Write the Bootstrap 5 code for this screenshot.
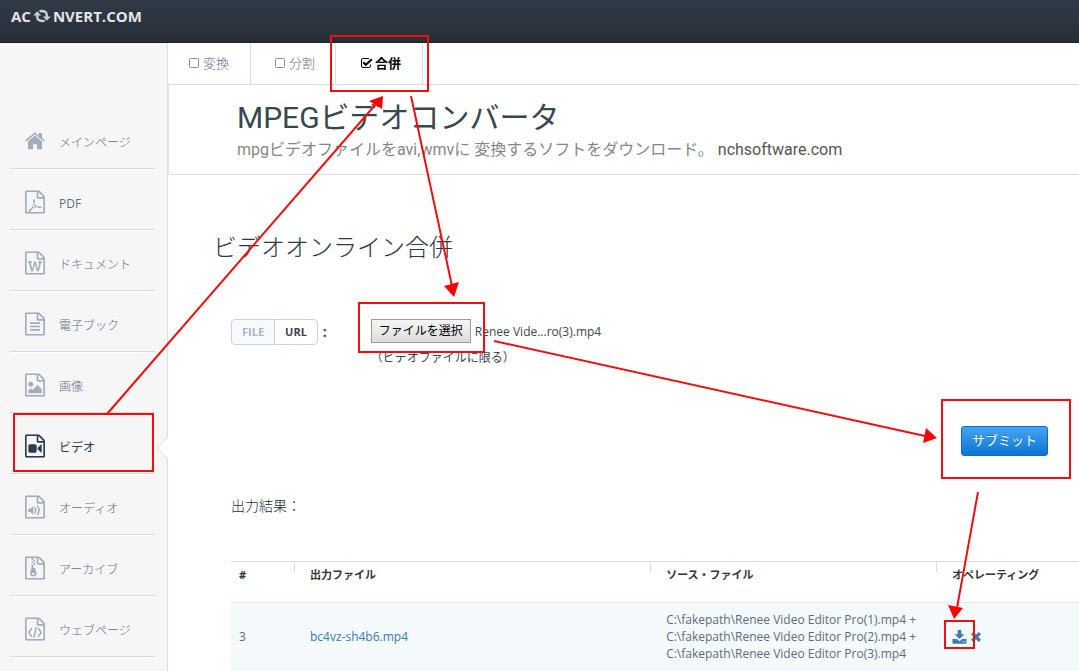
<!DOCTYPE html>
<html lang="ja">
<head>
<meta charset="utf-8">
<meta name="viewport" content="width=device-width, initial-scale=1">
<title>ビデオオンライン合併 - ACONVERT.COM</title>
<link rel="stylesheet" href="https://cdn.jsdelivr.net/npm/bootstrap@5.3.0/dist/css/bootstrap.min.css">
<style>
  body { font: 12px/17px "Open Sans", "Noto Sans CJK JP", sans-serif; color: #3c4650; background: #fff; overflow-x: hidden; }
  a { text-decoration: none; color: #3a7ab0; }
  .topbar { height: 43px; padding: 6px 11px; background: linear-gradient(#303b47, #272e38); border-bottom: 1px solid #1b2026; }
  .brand { color: #e4e6e8; font-size: 15px; line-height: 20px; font-weight: 700; gap: 2px; }
  .side { width: 168px; padding: 65px 12px 0 10px; background: #f6f6f6; border-right: 1px solid #d9dfe6; }
  .side-link { height: 61px; padding: 8px 0 0 15px; gap: 14px; color: #5f7087; font-weight: 300; border-bottom: 1px solid #d5dbe1; box-shadow: 0 1px #fff; }
  .side-link svg { width: 20px; height: 24px; margin-bottom: 2px; fill: #a0adbd; stroke: none; }
  .side-link.current { color: #2a3b4c; font-weight: 400; }
  .side-link.current svg { fill: #2a3b4c; }
  .notch { position: absolute; right: -13px; top: 23px; width: 12px; height: 24px; overflow: hidden; }
  .side-link .notch svg { display: block; width: 12px; height: 24px; fill: #fff; stroke: #d9dfe6; }
  .tabs { height: 42px; border-bottom: 1px solid #d5dce4; }
  .tabs a { gap: 2px; padding: 0 21px 0 20px; color: #5f7087; font-size: 13px; font-weight: 300; border-right: 1px solid #d9dfe6; }
  .tabs a + a { padding: 0 20px 0 23px; }
  .tabs a.current { padding: 0 21px 0 24px; color: #000; font-weight: 700; }
  .tabs svg { width: 13px; height: 13px; }
  .promo { height: 90px; padding: 15px 0 0 68px; border-left: 1px solid #e2e4e6; border-bottom: 1px solid #dfe1e3; font-family: Roboto, "Noto Sans CJK JP", sans-serif; }
  .promo h2 { font-size: 30px; line-height: 36px; font-weight: 300; }
  .promo h2 a { color: #37474f; font-weight: 400; }
  .promo p { font-size: 16px; line-height: 28px; color: #868686; }
  .promo p a { color: #555; }
  .work { padding-top: 56px; }
  .work h1 { margin: 0 0 56px 45px; font-size: 24px; line-height: 32px; font-weight: 300; color: #2d3741; }
  .form-line { padding-left: 63px; }
  .switch .btn { padding: 0 10px; height: 26px; font-size: 11px; line-height: 24px; font-weight: 700; color: #3c4650; background: #fff; border: 1px solid #cbd3dd; border-radius: 4px; }
  .switch .btn:first-child { color: #a9b5c4; background: #f8f9fa; }
  .colon { width: 49px; padding-left: 5px; font-size: 14px; font-weight: 700; }
  .pick { height: 24px; width: 100px; padding: 0; font-size: 12px; line-height: 20px; color: #000; border: 1px solid #999; background: linear-gradient(#f6f6f6, #dcdcdc); }
  .hint { margin-top: 6px; }
  .send { height: 30px; width: 87px; padding: 0; margin: 60px 31px 0 0; font-size: 13px; color: #fff; border: 1px solid #0b6cc4; border-radius: 3px; background: linear-gradient(#45a5f5, #0c74d4); text-shadow: 0 -1px rgba(0,0,0,.2); }
  .send:hover { color: #fff; }
  .result-title { margin: 39px 0 44px 63px; font-size: 14px; line-height: 22px; font-weight: 300; color: #222c36; }
  .grid-wrap { padding-left: 63px; }
  .files { table-layout: fixed; width: 100%; color: #5d6b7c; }
  .files th { height: 41px; padding: 3px 16px 0; font-size: 11px; line-height: 20px; font-weight: 700; color: #333; vertical-align: top; border-top: 1px solid #dadee1;
    background: linear-gradient(#d8dce0, #d8dce0) no-repeat 0 0 / 1px 10px; }
  .files th:first-child { background: none; }
  .files td { height: 68px; padding: 0 16px; background: #f4f9fc; border-top: 1px solid #e3eaef; vertical-align: middle; }
  .files th:first-child, .files td:first-child { padding-left: 8px; }
  .files svg { fill: #3a7ab0; }
  .marks { position: absolute; left: 0; top: 0; width: 1079px; height: 671px; pointer-events: none; }
</style>
</head>
<body class="d-flex flex-column min-vh-100 position-relative">

<header class="topbar">
  <a class="brand d-inline-flex align-items-center" href="#">AC<svg width="18" height="16" viewBox="0 0 18 16" fill="none" stroke="#c9ced4" stroke-width="2.4" aria-label="O"><path d="M4.200 7v1.500q0 4.500 5 4.500 1.500 0 2.300-.6M6.500 3.600Q7.300 3 8.800 3q5 0 5 4.500V9"/><path d="M.2 7.600 4.200 3.200 8.200 7.600zM9.800 8.400 13.800 12.800 17.800 8.400z" fill="#c9ced4" stroke="none"/></svg>NVERT.COM</a>
</header>

<svg class="d-none" aria-hidden="true">
  <symbol id="sheet" viewBox="0 0 1536 1792"><path d="M1468 380q28 28 48 76t20 88v1152q0 40-28 68t-68 28H96q-40 0-68-28t-28-68V96q0-40 28-68T96 0h896q40 0 88 20t76 48zM1024 136v376h376q-10-29-22-41l-313-313q-12-12-41-22zm384 1528V640H992q-40 0-68-28t-28-68V128H128v1536z"/></symbol>
</svg>

<div class="d-flex flex-fill">
  <nav class="side flex-shrink-0">
    <a class="side-link d-flex align-items-center" href="#"><svg viewBox="0 0 20 24"><path d="M10 6.500 3 12.300V19.500q0 .8.800.8H8v-5h4v5h4.200q.8 0 .8-.8v-7.200zM19.900 11.300 17 8.900V4h-3v2.400L10.900 3.900q-.9-.7-1.800 0L.1 11.300l1 1.200L10 5.200l8.900 7.300z"/></svg>メインページ</a>
    <a class="side-link d-flex align-items-center" href="#"><svg viewBox="0 0 1536 1792"><use href="#sheet"/><path d="M640 700q70-60 110 20t-10 320q80 130 190 200 240-30 330 20 60 60-10 95-90 50-340-50-170 25-330 90-150 270-260 280-85-20-50-100 40-90 210-175 110-190 180-380-50-160-40-270zM660 1170q-30 80-75 150 120-45 230-65-90-60-155-185z" fill-rule="evenodd"/></svg><span class="fw-normal">PDF</span></a>
    <a class="side-link d-flex align-items-center" href="#"><svg viewBox="0 0 1536 1792"><use href="#sheet"/><path d="M233 768v107h70l164 661h159l128-485q7-20 10-46 2-16 2-24h4l3 24q1 3 3.500 20t5.500 26l128 485h159l164-661h70V768h-300v107h90l-99 438q-5 20-7 46l-2 21h-4q0-3-.5-6.500t-1.500-8-1-6.500q-1-5-4-21t-5-25L825 768H710l-144 545q-2 9-4.500 24.500T558 1359l-4 21h-4l-2-21q-2-26-7-46l-99-438h90V768z"/></svg>ドキュメント</a>
    <a class="side-link d-flex align-items-center" href="#"><svg viewBox="0 0 1536 1792"><use href="#sheet"/><path d="M384 768h768v128H384zM384 1024h768v128H384zM384 1280h768v128H384z"/></svg>電子ブック</a>
    <a class="side-link d-flex align-items-center" href="#"><svg viewBox="0 0 1536 1792"><use href="#sheet"/><path d="M1280 1216v320H256v-192l192-192 128 128 384-384zM448 1024q-80 0-136-56t-56-136 56-136 136-56 136 56 56 136-56 136-136 56z"/></svg>画像</a>
    <a class="side-link current d-flex align-items-center position-relative" href="#" aria-current="page"><svg viewBox="0 0 1536 1792"><use href="#sheet"/><path d="M768 768q52 0 90 38t38 90v384q0 52-38 90t-90 38H384q-52 0-90-38t-38-90V896q0-52 38-90t90-38zM1260 770q20 8 20 30v576q0 22-20 30-8 2-12 2-14 0-23-9l-265-266v-90l265-266q9-9 23-9 4 0 12 2z"/></svg>ビデオ<span class="notch"><svg viewBox="0 0 12 24"><path d="M12.500 .5 1 12 12.500 23.500"/></svg></span></a>
    <a class="side-link d-flex align-items-center" href="#"><svg viewBox="0 0 1536 1792"><use href="#sheet"/><path d="M620 850q20 8 20 30v544q0 22-20 30-8 2-12 2-12 0-23-9l-166-167H288q-14 0-23-9t-9-23v-192q0-14 9-23t23-9h131l166-167q16-15 35-7z"/><path d="M760 960q130 190 0 380M960 830q250 320 0 640" fill="none" stroke="#a0adbd" stroke-width="120" stroke-linecap="round"/></svg>オーディオ</a>
    <a class="side-link d-flex align-items-center" href="#"><svg viewBox="0 0 1536 1792"><use href="#sheet"/><path d="M500 128h140v128H500zM640 256h140v128H640zM500 384h140v128H500zM640 512h140v128H640zM500 640h140v128H500zM770 900l107 349q15 55 15 95 0 90-72 141t-180 51-180-51-72-141q0-50 112-480V768h140v128h90q30 0 40 4zM640 1408q53 0 90-19t37-45-37-45-90-19-90 19-37 45 37 45 90 19z" fill-rule="evenodd"/></svg>アーカイブ</a>
    <a class="side-link d-flex align-items-center" href="#"><svg viewBox="0 0 1536 1792"><use href="#sheet"/><path d="M510 860 290 1160 510 1460M1026 860l220 300-220 300M850 790 690 1530" fill="none" stroke="#a0adbd" stroke-width="115" stroke-linecap="round" stroke-linejoin="round"/></svg>ウェブページ</a>
  </nav>

  <main class="flex-fill overflow-hidden">
    <nav class="tabs d-flex">
      <a class="d-flex align-items-center" href="#"><svg viewBox="0 0 13 13" fill="none" stroke="#8391a4"><rect x="1.500" y="1.500" width="9" height="9" rx="1"/></svg>変換</a>
      <a class="d-flex align-items-center" href="#"><svg viewBox="0 0 13 13" fill="none" stroke="#8391a4"><rect x="1.500" y="1.500" width="9" height="9" rx="1"/></svg>分割</a>
      <a class="current d-flex align-items-center" href="#" aria-current="page"><svg viewBox="0 0 13 13" fill="none" stroke="#000"><path d="M10.500 7.500v1.500a1.500 1.500 0 0 1-1.500 1.500H3A1.500 1.500 0 0 1 1.500 9V3A1.500 1.500 0 0 1 3 1.500h6"/><path d="M3.200 5.200 5.800 7.800l6-5.500" stroke-width="2"/></svg>合併</a>
    </nav>

    <section class="promo">
      <h2 class="m-0"><a href="#">MPEGビデオコンバータ</a></h2>
      <p class="m-0">mpgビデオファイルをavi,wmvに 変換するソフトをダウンロード。 <a href="#">nchsoftware.com</a></p>
    </section>

    <section class="work">
      <h1>ビデオオンライン合併</h1>
      <form onsubmit="return false">
        <div class="form-line d-flex align-items-start">
          <div class="btn-group switch" role="group" aria-label="入力の種類">
            <button type="button" class="btn">FILE</button>
            <button type="button" class="btn">URL</button>
          </div>
          <span class="colon pt-1">:</span>
          <div class="ps-1">
            <div class="d-flex align-items-center gap-1">
              <button type="button" class="pick">ファイルを選択</button>
              <span>Renee Vide...ro(3).mp4</span>
            </div>
            <div class="hint">（ビデオファイルに限る）</div>
          </div>
        </div>
        <div class="d-flex justify-content-end"><button type="submit" class="btn send">サブミット</button></div>
      </form>

      <p class="result-title">出力結果：</p>
      <div class="grid-wrap">
        <table class="files">
          <colgroup><col style="width:63px"><col style="width:42%"><col><col style="width:143px"></colgroup>
          <thead><tr><th scope="col">#</th><th scope="col">出力ファイル</th><th scope="col">ソース・ファイル</th><th scope="col">オペレーティング</th></tr></thead>
          <tbody><tr>
            <td>3</td>
            <td><a href="#">bc4vz-sh4b6.mp4</a></td>
            <td>C:\fakepath\Renee Video Editor Pro(1).mp4 +<br>C:\fakepath\Renee Video Editor Pro(2).mp4 +<br>C:\fakepath\Renee Video Editor Pro(3).mp4</td>
            <td><div class="d-flex align-items-center gap-1">
              <a class="d-flex" href="#" aria-label="ダウンロード"><svg width="15" height="14" viewBox="0 0 14 14"><path d="M5.200 0h3.600v4.200h3.200L7 9 2 4.200h3.200zM0 9h4.200L7 11.300 9.800 9H14v4q0 .8-.8.800H.8Q0 13.800 0 13zm10 2.200v1h1v-1zm2 0v1h1v-1z" fill-rule="evenodd"/></svg></a>
              <a class="d-flex" href="#" aria-label="削除"><svg width="10" height="14" viewBox="0 0 10 14"><path d="M2.200 2 5 4.800 7.800 2 10 4.200 7.200 7 10 9.800 7.800 12 5 9.200 2.200 12 0 9.800 2.800 7 0 4.200z"/></svg></a>
            </div></td>
          </tr></tbody>
        </table>
      </div>
    </section>
  </main>
</div>

<svg class="marks" viewBox="0 0 1079 671" fill="none" stroke="#ee1010" stroke-width="2" aria-hidden="true">
  <path d="M331 36h97v55h-97zM14 414h139v57H14zM359 303h125v49H359zM942 400h128v78H942zM945 621h29v27h-29z"/>
  <path d="M107 414 376 104M411 96l41 190M494 341l431 95M978 492l-21 116"/>
  <path d="M383 96 369 101 382 109zM454 297 444 286 459 282zM937 438 926 428 923 443zM954 619 948 605 963 608z" fill="#fd0000" stroke="none"/>
</svg>

<script src="https://cdn.jsdelivr.net/npm/bootstrap@5.3.0/dist/js/bootstrap.bundle.min.js"></script>
</body>
</html>
